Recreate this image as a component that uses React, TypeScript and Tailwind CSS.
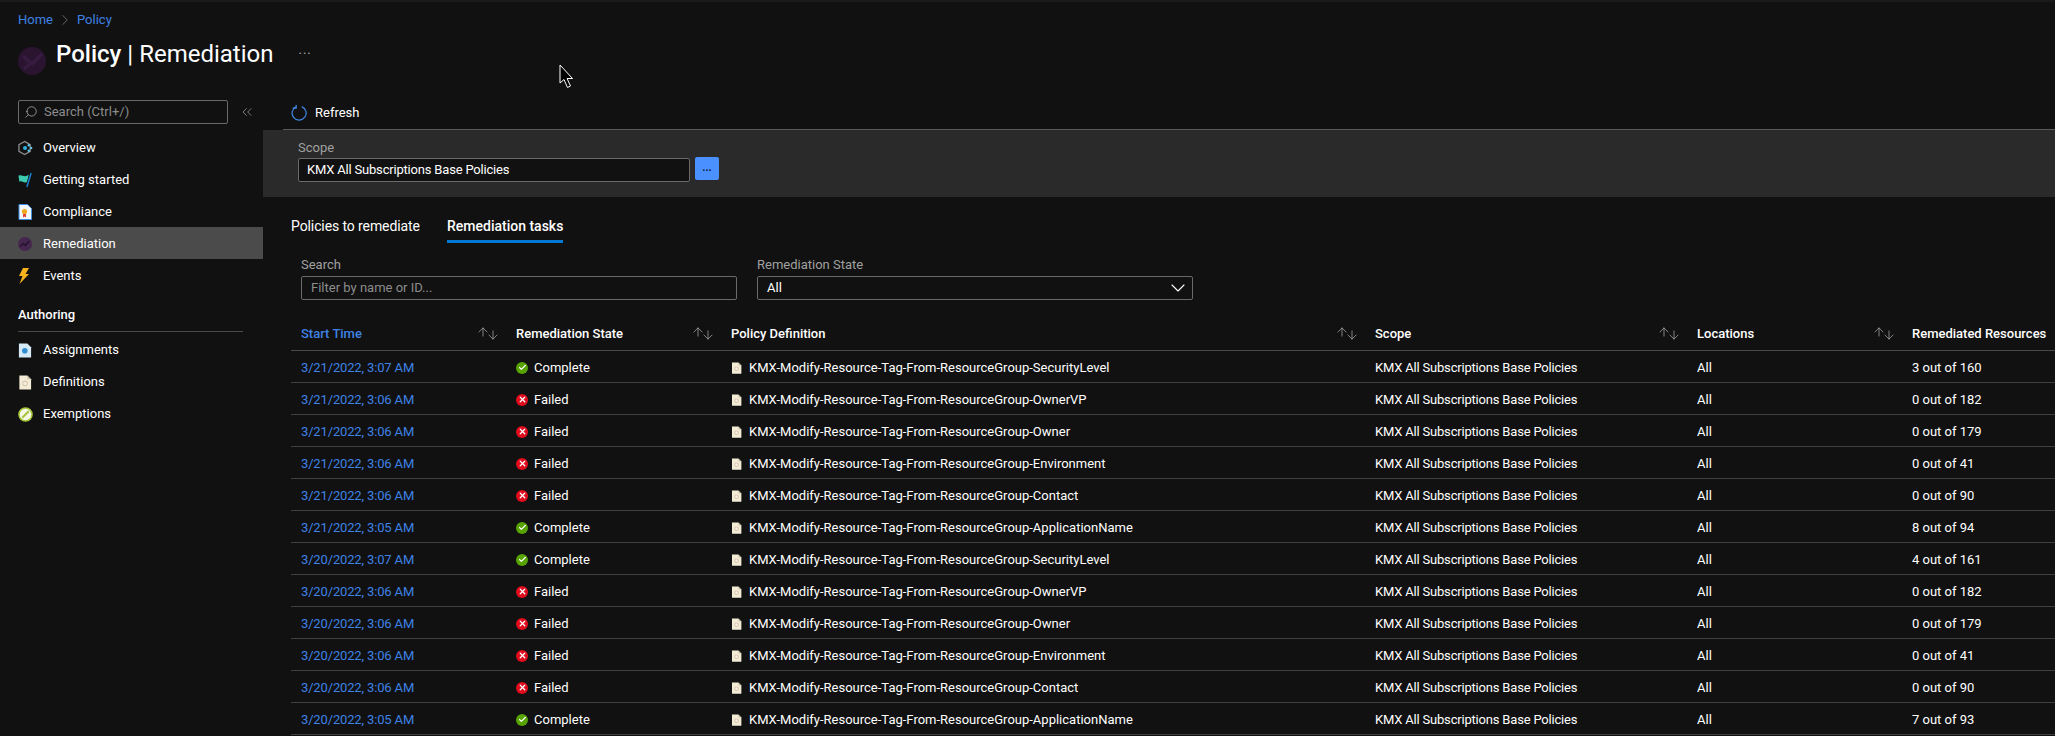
import React from 'react';
import { ChevronRight, ChevronDown, ChevronsLeft, Search, ArrowUp, ArrowDown, Check, X } from 'lucide-react';

const font = { fontFamily: 'Roboto' };

type Row = { time: string; ok: boolean; tag: string; res: string };

const rows: Row[] = [
    { time: '3/21/2022, 3:07 AM', ok: true, tag: 'SecurityLevel', res: '3 out of 160' },
    { time: '3/21/2022, 3:06 AM', ok: false, tag: 'OwnerVP', res: '0 out of 182' },
    { time: '3/21/2022, 3:06 AM', ok: false, tag: 'Owner', res: '0 out of 179' },
    { time: '3/21/2022, 3:06 AM', ok: false, tag: 'Environment', res: '0 out of 41' },
    { time: '3/21/2022, 3:06 AM', ok: false, tag: 'Contact', res: '0 out of 90' },
    { time: '3/21/2022, 3:05 AM', ok: true, tag: 'ApplicationName', res: '8 out of 94' },
    { time: '3/20/2022, 3:07 AM', ok: true, tag: 'SecurityLevel', res: '4 out of 161' },
    { time: '3/20/2022, 3:06 AM', ok: false, tag: 'OwnerVP', res: '0 out of 182' },
    { time: '3/20/2022, 3:06 AM', ok: false, tag: 'Owner', res: '0 out of 179' },
    { time: '3/20/2022, 3:06 AM', ok: false, tag: 'Environment', res: '0 out of 41' },
    { time: '3/20/2022, 3:06 AM', ok: false, tag: 'Contact', res: '0 out of 90' },
    { time: '3/20/2022, 3:05 AM', ok: true, tag: 'ApplicationName', res: '7 out of 93' },
];

const gridCols = 'grid grid-cols-[215px_215px_644px_322px_215px_1fr]';

const DocIcon = ({ className }: { className: string }) => (
    <svg viewBox="0 0 14 16" className={className}>
        <path d="M1 0.5H9.5L13.5 4.5V15.5H1Z" fill="#f5ecd7" />
        <path d="M9.5 0.5L13.5 4.5H9.5Z" fill="#c9bfa8" />
        <circle cx="7" cy="9" r="2.6" fill="none" stroke="#c8bda6" strokeWidth="1" />
    </svg>
);

const OverviewIcon = () => (
    <svg viewBox="0 0 16 16" className="w-[15px] h-[16px]">
        <path d="M7 1L13 4.5V11.5L7 15L1 11.5V4.5Z" fill="none" stroke="#8a8a8a" strokeWidth="1.4" />
        <circle cx="7.5" cy="8" r="2.2" fill="#32b0e0" />
        <circle cx="11.5" cy="5" r="1.3" fill="#5ec8ee" />
        <circle cx="14" cy="8" r="1.3" fill="#5ec8ee" />
        <circle cx="11.5" cy="11" r="1.3" fill="#5ec8ee" />
    </svg>
);

const FlagIcon = () => (
    <svg viewBox="0 0 16 16" className="w-[15px] h-[16px]">
        <path d="M0.5 3.5C4 1.5 7 6 11.5 2.5L9.5 10C6 12 4 8 1.5 10Z" fill="#3cc9ae" />
        <path d="M14 0.5L9.5 15.5" stroke="#1b7fcf" strokeWidth="1.6" />
    </svg>
);

const ComplianceIcon = () => (
    <svg viewBox="0 0 14 16" className="w-[14px] h-[16px]">
        <path d="M1 0.5H9.5L13.5 4.5V15.5H1Z" fill="#f2f7fc" stroke="#3f8fe0" strokeWidth="1" />
        <circle cx="6.5" cy="7.5" r="2.6" fill="#f0a81e" />
        <path d="M5 10H8V13.5L6.5 12.5L5 13.5Z" fill="#e0403a" />
    </svg>
);

const TrendIcon = () => (
    <svg viewBox="0 0 16 16" className="w-[14px] h-[14px]">
        <circle cx="8" cy="8" r="8" fill="#44264f" />
        <path d="M2.5 11L6 7.5L8.5 9.5L13 4.5" fill="none" stroke="#1c1022" strokeWidth="1.4" />
    </svg>
);

const BoltIcon = () => (
    <svg viewBox="0 0 12 16" className="w-[12px] h-[16px]">
        <path d="M5 0H11L7.5 6H11L1.5 16L4.5 8H1Z" fill="#f7b21c" />
    </svg>
);

const AssignIcon = () => (
    <svg viewBox="0 0 14 16" className="w-[14px] h-[15px]">
        <path d="M0.5 0.5H9.5L13.5 4.5V15.5H0.5Z" fill="#d5ebf7" />
        <circle cx="6.8" cy="8.2" r="3" fill="#2f8fd0" />
    </svg>
);

const ExemptIcon = () => (
    <svg viewBox="0 0 16 16" className="w-[15px] h-[15px]">
        <circle cx="8" cy="8" r="7" fill="#f4f7e4" stroke="#a3c436" strokeWidth="1.6" />
        <path d="M4.5 11.5L11.5 4.5" stroke="#a3c436" strokeWidth="2" />
    </svg>
);

const RefreshIcon = () => (
    <svg viewBox="0 0 16 16" className="w-4 h-4" fill="none" stroke="#3f8ae8" strokeWidth="1.2">
        <path d="M5 1.8A7 7 0 1 0 10.8 1.6" />
        <path d="M5.2 0V3.8H1.6" transform="translate(0 -0.6)" />
    </svg>
);

const SortIcons = () => (
    <span className="flex items-center text-[#a8a8a8]">
        <ArrowUp size={14} strokeWidth={1.3} className="-mt-[3px] -mr-[4px]" />
        <ArrowDown size={14} strokeWidth={1.3} className="mt-[2px]" />
    </span>
);

const NavItem = ({ icon, label, active }: { icon: React.ReactNode; label: string; active?: boolean }) => (
    <div className={`flex items-center h-8 pt-[2px] pl-[18px] text-[13px] text-white ${active ? 'bg-[#4b4b4b]' : ''}`}>
        <span className="w-[25px] flex items-center">{icon}</span>
        {label}
    </div>
);

const HeaderCell = ({ label, link, sort = true }: { label: string; link?: boolean; sort?: boolean }) => (
    <div className="flex items-center justify-between pl-[10px] pr-[6px]">
        <span className={`font-medium whitespace-nowrap ${link ? 'text-[#3f82e4]' : 'text-white'}`}>{label}</span>
        {sort && <SortIcons />}
    </div>
);

const App = () => {
    return (
        <div style={font} className="relative flex h-[736px] w-[2055px] overflow-hidden bg-[#111111] border-t-2 border-[#1a1a1a] text-white">
            {/* left column */}
            <aside className="w-[263px] shrink-0">
                <div className="flex items-center h-[17px] mt-[9px] pl-[18px] text-[13px] text-[#3f82e4]">
                    Home
                    <ChevronRight size={18} strokeWidth={0.9} className="mx-[3px] text-[#8a8a8a]" />
                    Policy
                </div>
                <div className="flex items-center mt-[8px] pl-[18px] h-[42px]">
                    <svg viewBox="0 0 28 28" className="w-7 h-7 mt-[8px]">
                        <circle cx="14" cy="14" r="14" fill="#2a1430" />
                        <path d="M5 9L14 17L24 7" fill="none" stroke="#371b41" strokeWidth="3.5" />
                        <path d="M6 22L14 15" stroke="#371b41" strokeWidth="3.5" />
                    </svg>
                </div>
                <div className="flex items-center mt-[22px] ml-[18px]">
                    <div className="flex items-center w-[210px] h-6 rounded-[2px] border border-[#6a6a6a] pl-[5px] text-[13px] text-[#8c8c8c]">
                        <Search size={14} strokeWidth={1.2} className="-scale-x-100 text-[#bdbdbd] mr-[6px]" />
                        Search (Ctrl+/)
                    </div>
                    <ChevronsLeft size={16} strokeWidth={1} className="ml-[11px] text-[#b0b0b0]" />
                </div>
                <nav className="mt-[7px]">
                    <NavItem icon={<OverviewIcon />} label="Overview" />
                    <NavItem icon={<FlagIcon />} label="Getting started" />
                    <NavItem icon={<ComplianceIcon />} label="Compliance" />
                    <NavItem icon={<TrendIcon />} label="Remediation" active />
                    <NavItem icon={<BoltIcon />} label="Events" />
                </nav>
                <div className="ml-[18px] w-[225px] mt-[15px] pb-[8px] border-b border-[#4a4a4a] text-[13px] font-medium leading-[17px]">
                    Authoring
                </div>
                <nav className="mt-px">
                    <NavItem icon={<AssignIcon />} label="Assignments" />
                    <NavItem icon={<DocIcon className="w-[14px] h-[15px]" />} label="Definitions" />
                    <NavItem icon={<ExemptIcon />} label="Exemptions" />
                </nav>
            </aside>

            {/* main column */}
            <main className="flex-1 min-w-0">
                <div className="h-[95px] pt-[36px] pl-[20px]">
                    <div className="flex items-center h-[32px] text-[24px] leading-8 -ml-[227px] relative">
                        <span className="font-medium">Policy</span>
                        <span className="mx-[6px]">|</span>
                        <span>Remediation</span>
                        <span className="ml-[25px] text-[13px] text-[#b0b0b0] tracking-[1px] -mt-2">...</span>
                    </div>
                </div>
                <div className="ml-[20px] h-[33px] flex items-center pl-[8px] text-[13px] border-b border-[#5a5a5a]">
                    <RefreshIcon />
                    <span className="ml-[8px]">Refresh</span>
                </div>
                <div className="h-[67px] bg-[#2a2a2a] pl-[35px] pt-[9px]">
                    <div className="text-[13px] leading-[17px] text-[#a0a0a0]">Scope</div>
                    <div className="flex items-start mt-[2px]">
                        <div className="flex items-center w-[392px] h-6 bg-[#111111] border border-[#6a6a6a] rounded-[2px] pl-[8px] text-[13px] tracking-[-0.19px]">
                            KMX All Subscriptions Base Policies
                        </div>
                        <div className="flex items-center justify-center w-[24px] h-[23px] ml-[5px] -mt-px bg-[#4a90ff] rounded-[2px] text-[11px] text-[#10233f] font-bold">
                            ...
                        </div>
                    </div>
                </div>
                <div className="flex ml-[28px] mt-[19px] h-[27px] text-[14px]">
                    <div className="w-[156px] leading-[20px] tracking-[-0.1px]">Policies to remediate</div>
                    <div className="w-[116px] h-[27px] border-b-[3px] border-[#0078d4] font-medium leading-[20px] whitespace-nowrap">Remediation tasks</div>
                </div>
                <div className="flex ml-[38px] mt-[13px] gap-5 text-[13px]">
                    <div className="w-[436px]">
                        <div className="leading-[17px] text-[#a0a0a0]">Search</div>
                        <div className="flex items-center h-6 mt-[3px] pl-[9px] border border-[#6a6a6a] rounded-[2px] text-[#8c8c8c]">
                            Filter by name or ID...
                        </div>
                    </div>
                    <div className="w-[436px]">
                        <div className="leading-[17px] text-[#a0a0a0]">Remediation State</div>
                        <div className="flex items-center justify-between h-6 mt-[3px] pl-[9px] pr-[2px] border border-[#6a6a6a] rounded-[2px]">
                            All
                            <ChevronDown size={24} strokeWidth={1.1} className="shrink-0" />
                        </div>
                    </div>
                </div>
                <div className="ml-[28px] mt-[19px] text-[13px]">
                    <div className={`${gridCols} h-8 pb-[2px] border-b border-[#4a4a4a]`}>
                        <HeaderCell label="Start Time" link />
                        <HeaderCell label="Remediation State" />
                        <HeaderCell label="Policy Definition" />
                        <HeaderCell label="Scope" />
                        <HeaderCell label="Locations" />
                        <HeaderCell label="Remediated Resources" sort={false} />
                    </div>
                    {rows.map((row, i) => (
                        <div key={i} className={`${gridCols} h-8 pt-[2px] items-center border-b border-[#3f3f3f]`}>
                            <div className="pl-[10px] text-[#3f82e4] tracking-[-0.15px]">{row.time}</div>
                            <div className="flex items-center pl-[10px]">
                                {row.ok ? (
                                    <span className="flex items-center justify-center w-3 h-3 rounded-full bg-[#57a300] mr-[6px]">
                                        <Check size={9} strokeWidth={3} />
                                    </span>
                                ) : (
                                    <span className="flex items-center justify-center w-3 h-3 rounded-full bg-[#e00b1c] mr-[6px]">
                                        <X size={9} strokeWidth={3.5} />
                                    </span>
                                )}
                                {row.ok ? 'Complete' : 'Failed'}
                            </div>
                            <div className="flex items-center pl-[10px]">
                                <DocIcon className="w-[11px] h-[12px] mr-[7px]" />
                                KMX-Modify-Resource-Tag-From-ResourceGroup-{row.tag}
                            </div>
                            <div className="pl-[10px] tracking-[-0.19px]">KMX All Subscriptions Base Policies</div>
                            <div className="pl-[10px]">All</div>
                            <div className="pl-[10px]">{row.res}</div>
                        </div>
                    ))}
                </div>
            </main>

            {/* mouse pointer */}
            <svg viewBox="0 0 16 25" className="absolute left-[559px] top-[62px] w-4 h-[25px]">
                <path d="M1 1V19L5 15.5L8.5 23.5L11.5 22L8 14.5H13.5Z" fill="#000" stroke="#fff" strokeWidth="1" />
            </svg>
        </div>
    );
};

export default App;
